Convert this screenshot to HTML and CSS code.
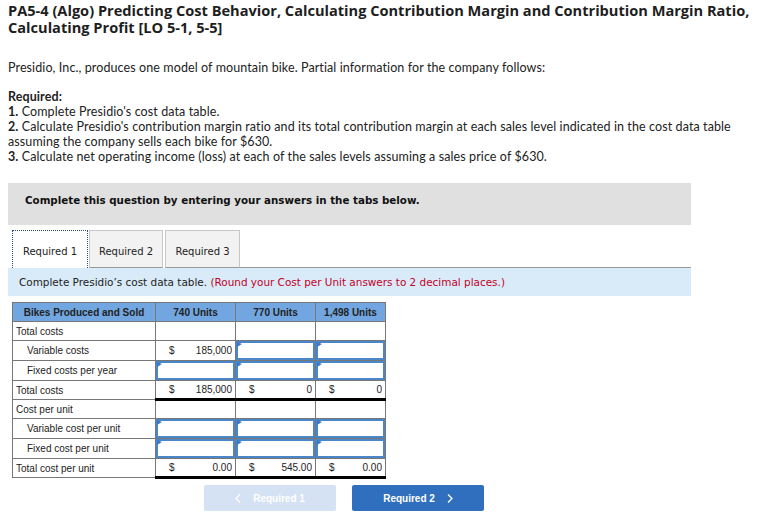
FILE: index.html
```html
<!DOCTYPE html>
<html>
<head>
<meta charset="utf-8">
<link rel="stylesheet" href="styles.css">
</head>
<body>
<h1 class="title">PA5-4 (Algo) Predicting Cost Behavior, Calculating Contribution Margin and Contribution Margin Ratio, Calculating Profit [LO 5-1, 5-5]</h1>
<p class="intro">Presidio, Inc., produces one model of mountain bike. Partial information for the company follows:</p>
<div class="required">
  <div><b>Required:</b></div>
  <div><b>1.</b> Complete Presidio's cost data table.</div>
  <div><b>2.</b> Calculate Presidio's contribution margin ratio and its total contribution margin at each sales level indicated in the cost data table</div>
  <div>assuming the company sells each bike for $630.</div>
  <div><b>3.</b> Calculate net operating income (loss) at each of the sales levels assuming a sales price of $630.</div>
</div>
<div class="question">
  <div class="instr">Complete this question by entering your answers in the tabs below.</div>
  <div class="tabs">
    <div class="tab active">Required 1</div>
    <div class="tab off t2">Required 2</div>
    <div class="tab off t3">Required 3</div>
    <div class="tab-fill"></div>
  </div>
  <div class="prompt">Complete Presidio’s cost data table. <span class="red">(Round your Cost per Unit answers to 2 decimal places.)</span></div>
  <table class="cost">
    <colgroup><col class="c1"><col class="c2"><col class="c2"><col class="c4"></colgroup>
    <tr><th>Bikes Produced and Sold</th><th>740 Units</th><th>770 Units</th><th>1,498 Units</th></tr>
    <tr><td class="lbl">Total costs</td><td></td><td></td><td></td></tr>
    <tr><td class="lbl ind">Variable costs</td><td class="val"><span>$</span><span>185,000</span></td><td class="in"><div class="inp"></div></td><td class="in"><div class="inp"></div></td></tr>
    <tr><td class="lbl ind">Fixed costs per year</td><td class="in"><div class="inp"></div></td><td class="in"><div class="inp"></div></td><td class="in"><div class="inp"></div></td></tr>
    <tr class="tot"><td class="lbl">Total costs</td><td class="val"><span>$</span><span>185,000</span></td><td class="val"><span>$</span><span>0</span></td><td class="val"><span>$</span><span>0</span></td></tr>
    <tr><td class="lbl">Cost per unit</td><td></td><td></td><td></td></tr>
    <tr><td class="lbl ind">Variable cost per unit</td><td class="in"><div class="inp"></div></td><td class="in"><div class="inp"></div></td><td class="in"><div class="inp"></div></td></tr>
    <tr><td class="lbl ind">Fixed cost per unit</td><td class="in"><div class="inp"></div></td><td class="in"><div class="inp"></div></td><td class="in"><div class="inp"></div></td></tr>
    <tr class="tot"><td class="lbl">Total cost per unit</td><td class="val"><span>$</span><span>0.00</span></td><td class="val"><span>$</span><span>545.00</span></td><td class="val"><span>$</span><span>0.00</span></td></tr>
  </table>
  <div class="nav">
    <div class="btn prev"><svg width="6" height="9" viewBox="0 0 6 9"><path d="M5 0.5 L1 4.5 L5 8.5" fill="none" stroke="#fff" stroke-width="1.3"/></svg><span>Required 1</span></div>
    <div class="btn next"><span>Required 2</span><svg width="6" height="9" viewBox="0 0 6 9"><path d="M1 0.5 L5 4.5 L1 8.5" fill="none" stroke="#fff" stroke-width="1.3"/></svg></div>
  </div>
</div>
</body>
</html>
```
FILE: styles.css
```css
* { box-sizing: border-box; }
body {
  margin: 0 8px;
  font-family: Lato, "Open Sans", sans-serif;
  color: #222;
  background: #fff;
}
.title {
  margin: 0;
  padding-top: 2px;
  font-family: "Open Sans", Lato, sans-serif;
  font-size: 14.6px;
  line-height: 17px;
  font-weight: 700;
  color: #1e1e1e;
}
.intro {
  margin: 24px 0 0;
  font-size: 12.5px;
  line-height: 15px;
  letter-spacing: 0.1px;
}
.required {
  margin-top: 14px;
  font-size: 12.5px;
  line-height: 15px;
  letter-spacing: 0.1px;
}
.question {
  width: 683px;
  margin-top: 19px;
}
.instr {
  height: 42px;
  background: #e0e0e0;
  padding: 11px 17px 0;
  font: bold 10.3px/12px "DejaVu Sans", Verdana, sans-serif;
  color: #111;
}
.tabs {
  display: flex;
  margin-top: 5px;
  height: 38px;
  padding-left: 4px;
}
.tab {
  height: 38px;
  padding-top: 15px;
  text-align: center;
  font: 10px/12px "DejaVu Sans", Verdana, sans-serif;
  color: #222;
}
.tab.active {
  width: 76px;
  background: #fff;
  border: 1px dotted #2b4f8a;
  border-bottom: none;
}
.tab.off {
  background: #f2f2f2;
  border: 1px solid #c8c8c8;
  border-bottom: 1px solid #999;
}
.t2 { width: 74px; margin-left: 1px; }
.t3 { width: 75px; margin-left: 2px; }
.tab-fill {
  flex: 1;
  border-bottom: 1px solid #999;
}
.prompt {
  height: 28px;
  background: #d9ebf9;
  padding-left: 11px;
  font: 10.45px/29px "DejaVu Sans", Verdana, sans-serif;
  color: #222;
}
.red { color: #c4001f; }
.cost {
  border-collapse: collapse;
  margin: 6px 0 0 4px;
  font: 10px "Liberation Sans", Arial, sans-serif;
  color: #222;
}
.c1 { width: 143px; }
.c2 { width: 80px; }
.c4 { width: 70px; }
.cost th {
  background: #72a6e0;
  border: 1px solid #777;
  height: 19px;
  padding: 0;
  font-weight: bold;
  color: #222;
}
.cost td {
  border: 1px solid #777;
  height: 19px;
  padding: 0 3px;
}
.cost td.ind { padding-left: 14px; }
.cost td.val {
  padding: 0 3px 0 13px;
}
.val { white-space: nowrap; }
.cost td.val span:last-child { float: right; }
.cost td.in { padding: 0; }
.inp {
  position: relative;
  height: 19px;
  border: 2px solid #4a86c8;
  background: #fff;
}
.inp::before {
  content: "";
  position: absolute;
  top: -1px;
  left: -1px;
  border-left: 5px solid #3a78d0;
  border-top: 2px solid transparent;
  border-bottom: 3px solid transparent;
}
.tot td:not(.lbl) {
  border-top: 1px solid #000;
  border-bottom: 3px solid #000;
}
.nav {
  display: flex;
  justify-content: center;
  gap: 16px;
  margin-top: 6px;
  padding-right: 11px;
}
.btn {
  width: 132px;
  height: 26px;
  border-radius: 2px;
  display: flex;
  align-items: center;
  justify-content: center;
  gap: 12px;
  font: bold 10px "Liberation Sans", Arial, sans-serif;
  color: #fff;
}
.prev { background: #d4e2f3; }
.next { background: #2f6fbd; }
```
